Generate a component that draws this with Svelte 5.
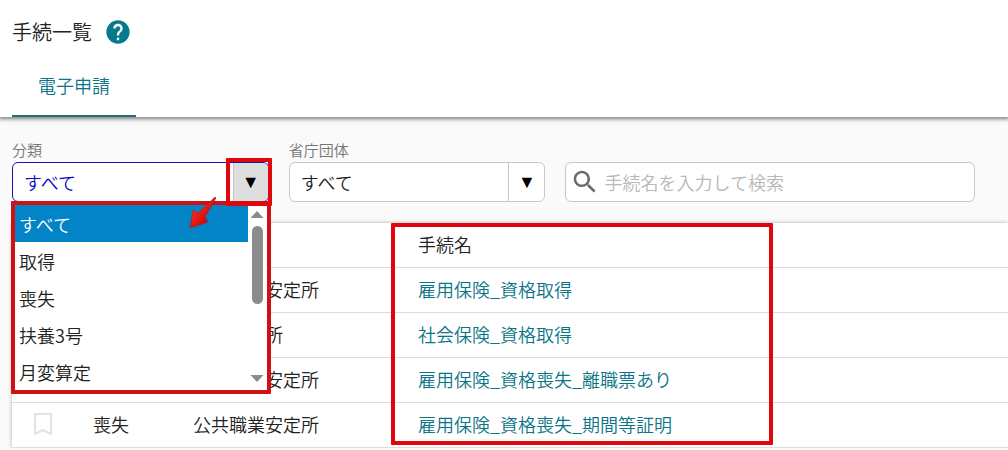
<script lang="ts">
	let category = 'すべて';
	let ministry = 'すべて';
	let keyword = '';
	let open = true;

	const categories = ['すべて', '取得', '喪失', '扶養3号', '月変算定'];
	const ministries = ['すべて', '公共職業安定所', '年金事務所'];
	const procedures = [
		{ category: '取得', office: '公共職業安定所', name: '雇用保険_資格取得' },
		{ category: '取得', office: '年金事務所', name: '社会保険_資格取得' },
		{ category: '喪失', office: '公共職業安定所', name: '雇用保険_資格喪失_離職票あり' },
		{ category: '喪失', office: '公共職業安定所', name: '雇用保険_資格喪失_期間等証明' }
	];

	const choose = (item: string) => {
		category = item;
		open = false;
	};
	const toggle = (): void => {
		open = !open;
	};
</script>

<header>
	<div class="title">
		<h1>手続一覧</h1>
		<button class="help" aria-label="ヘルプ">
			<svg viewBox="0 0 24 24" width="28" height="28">
				<path
					fill="#037b8c"
					d="M12 2C6.48 2 2 6.48 2 12s4.48 10 10 10 10-4.48 10-10S17.52 2 12 2zm1 17h-2v-2h2v2zm2.07-7.75l-.9.92C13.45 12.9 13 13.5 13 15h-2v-.5c0-1.1.45-2.1 1.17-2.83l1.24-1.26c.37-.36.59-.86.59-1.41 0-1.1-.9-2-2-2s-2 .9-2 2H8c0-2.21 1.79-4 4-4s4 1.79 4 4c0 .88-.36 1.68-.93 2.25z"
				/>
			</svg>
		</button>
	</div>
	<nav>
		<a class="tab" href="#denshi">電子申請</a>
	</nav>
</header>

<main>
	<div class="filters">
		<div class="field">
			<label for="category">分類</label>
			<div class="control active">
				<select id="category" bind:value={category}>
					{#each categories as item}
						<option value={item}>{item}</option>
					{/each}
				</select>
				<button class="arrow" aria-label="分類を開く" on:click={toggle}>▼</button>
				<div class="mark markArrow"></div>
			</div>
			{#if open}
				<div class="dropdown">
					<ul>
						{#each categories as item}
							<li>
								<button class:selected={item === category} on:click={() => choose(item)}>{item}</button>
							</li>
						{/each}
					</ul>
					<div class="scrollbar">
						<svg viewBox="0 0 14 7" width="14" height="7"><path fill="#8b8b8b" d="M7 0l6.500 7h-13z" /></svg>
						<div class="track"><div class="thumb"></div></div>
						<svg viewBox="0 0 14 7" width="14" height="7"><path fill="#8b8b8b" d="M7 7l6.500-7h-13z" /></svg>
					</div>
					<svg class="pointer" viewBox="0 0 32 36" width="32" height="36">
						<defs>
							<linearGradient id="red" x1="0" y1="0" x2="1" y2="1">
								<stop offset="0.300" stop-color="#f52a20" />
								<stop offset="0.700" stop-color="#d00808" />
							</linearGradient>
						</defs>
						<path
							fill="url(#red)"
							stroke="#8d2430"
							stroke-width="0.600"
							stroke-linejoin="round"
							d="M2 33L5 15L10 18L27 2L28 3L17 22L20 27Z"
						/>
					</svg>
				</div>
			{/if}
		</div>

		<div class="field">
			<label for="ministry">省庁団体</label>
			<div class="control">
				<select id="ministry" bind:value={ministry}>
					{#each ministries as item}
						<option value={item}>{item}</option>
					{/each}
				</select>
				<span class="arrow" aria-hidden="true">▼</span>
			</div>
		</div>

		<div class="control search">
			<svg viewBox="0 0 24 24" width="30" height="30">
				<path
					fill="#6b6b6b"
					d="M15.500 14h-.79l-.28-.27C15.410 12.590 16 11.110 16 9.500 16 5.910 13.090 3 9.500 3S3 5.910 3 9.500 5.910 16 9.500 16c1.610 0 3.090-.59 4.230-1.570l.27.28v.79l5 4.990L20.490 19l-4.990-5zm-6 0C7.010 14 5 11.990 5 9.500S7.010 5 9.500 5 14 7.010 14 9.500 11.990 14 9.500 14z"
				/>
			</svg>
			<input type="text" aria-label="手続名" placeholder="手続名を入力して検索" bind:value={keyword} />
		</div>
	</div>

	<div class="list">
		<table>
			<thead>
				<tr>
					<th class="colMark"></th>
					<th class="colCategory">分類</th>
					<th class="colOffice">省庁団体</th>
					<th>手続名</th>
				</tr>
			</thead>
			<tbody>
				{#each procedures as row}
					<tr>
						<td class="colMark">
							<button class="bookmark" aria-label="ブックマーク">
								<svg viewBox="0 0 18 22" width="18" height="22">
									<path fill="none" stroke="#e2e2e2" stroke-width="2" stroke-linejoin="round" d="M1 1h16v20l-8-4-8 4z" />
								</svg>
							</button>
						</td>
						<td>{row.category}</td>
						<td>{row.office}</td>
						<td><a href="#procedure">{row.name}</a></td>
					</tr>
				{/each}
			</tbody>
		</table>
		<div class="mark markNames"></div>
	</div>
</main>

<style>
	:global(body) {
		margin: 0;
		background-color: #fafafa;
		color: #222;
		font-family: 'Noto Sans CJK JP', sans-serif;
		font-size: 18px;
		font-weight: 350;
		line-height: 24px;
	}
	button,
	input,
	select {
		margin: 0;
		padding: 0;
		border: none;
		background: none;
		color: inherit;
		font: inherit;
	}
	svg {
		display: block;
	}
	a {
		color: #0b7587;
		text-decoration: none;
	}
	header {
		position: relative;
		padding: 16px 12px 0;
		background-color: #fff;
		box-shadow: 0 1px 4px 1px rgba(0, 0, 0, 0.5);
	}
	.title {
		display: flex;
		align-items: center;
		gap: 12px;
		height: 32px;
	}
	h1 {
		margin: 0;
		font-size: 20px;
		font-weight: 350;
	}
	nav {
		display: flex;
		padding-top: 8px;
	}
	.tab {
		padding: 17px 26px 18px;
		border-bottom: 2px solid #1c6f7c;
	}
	main {
		padding: 21px 0 0 12px;
	}
	.filters {
		display: grid;
		grid-template-columns: 257fr 257fr 410fr;
		align-items: end;
		gap: 20px;
		padding-right: 33px;
	}
	.field {
		position: relative;
	}
	label {
		display: block;
		color: #757575;
		font-size: 15px;
	}
	.control {
		position: relative;
		display: flex;
		box-sizing: border-box;
		height: 40px;
		border: 1px solid #c8c8c8;
		border-radius: 6px;
		background-color: #fff;
	}
	select {
		flex: 1;
		min-width: 0;
		padding: 0 11px 1px;
		appearance: none;
		outline: none;
	}
	.arrow {
		width: 35px;
		border-left: 1px solid #c8c8c8;
		color: #000;
		font-family: 'DejaVu Sans', sans-serif;
		font-size: 18px;
		line-height: 38px;
		text-align: center;
	}
	.active {
		border-color: #1414b4;
		color: #0a0ac8;
	}
	.active .arrow {
		border-radius: 0 5px 5px 0;
		background-color: #dedede;
	}
	.search {
		align-items: center;
		padding-left: 4px;
	}
	.search input {
		flex: 1;
		min-width: 0;
		padding: 0 4px 1px;
		outline: none;
	}
	.search input::placeholder {
		color: #b8b8b8;
		opacity: 1;
	}
	.dropdown {
		position: absolute;
		z-index: 10;
		top: 63px;
		left: -1px;
		right: -2px;
		display: flex;
		border: 4px solid #d01014;
		border-radius: 1px;
		background-color: #fff;
	}
	.dropdown ul {
		flex: 1;
		margin: 0;
		padding: 1px 0 0;
		background: linear-gradient(#0284c7 2px, #fff 2px);
		list-style: none;
	}
	.dropdown li {
		padding-bottom: 1px;
	}
	.dropdown li:last-child {
		padding-bottom: 0;
	}
	.dropdown li button {
		display: block;
		width: 100%;
		height: 36px;
		padding: 0 4px;
		text-align: left;
	}
	.dropdown li .selected {
		background-color: #0284c7;
		color: #fff;
	}
	.scrollbar {
		display: flex;
		flex-direction: column;
		align-items: center;
		width: 19px;
		padding: 6px 0 8px;
	}
	.track {
		flex: 1;
		padding: 8px 0;
	}
	.thumb {
		width: 11px;
		height: 78px;
		border-radius: 6px;
		background-color: #8b8b8b;
	}
	.pointer {
		position: absolute;
		top: -10px;
		right: 47px;
	}
	.mark {
		position: absolute;
		border: 4px solid #e0060c;
		border-radius: 1px;
		pointer-events: none;
	}
	.markArrow {
		z-index: 11;
		top: -5px;
		right: -4px;
		width: 38px;
		height: 40px;
	}
	.list {
		position: relative;
		margin-top: 21px;
		background-color: #fff;
		box-shadow: 0 0 4px rgba(0, 0, 0, 0.3);
	}
	.markNames {
		top: 0;
		left: 379px;
		width: 374px;
		height: 214px;
	}
	table {
		width: 100%;
		border-collapse: collapse;
		table-layout: fixed;
	}
	th,
	td {
		height: 42px;
		padding: 0 0 2px;
		border-bottom: 1px solid #dcdcdc;
		font-weight: 350;
		text-align: left;
	}
	.colMark {
		width: 81px;
	}
	.colCategory {
		width: 100px;
	}
	.colOffice {
		width: 225px;
	}
	.bookmark {
		display: block;
		margin-left: 22px;
	}
</style>
